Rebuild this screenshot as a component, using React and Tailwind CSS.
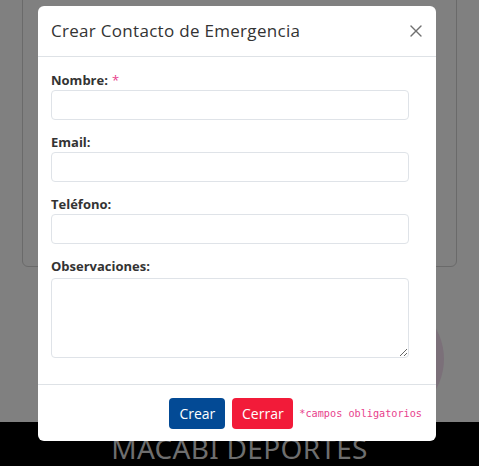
import { X } from 'lucide-react'

function Field({ label, required, children }) {
  return (
    <div className="mb-[12px]">
      <label className="block h-[20px] text-[13px] leading-[20px] font-bold text-[#333]">
        {label}
        {required && <span className="ml-[4px] text-[#e83e8c] font-normal">*</span>}
      </label>
      {children}
    </div>
  )
}

export default function App() {
  const inputCls = 'block w-full h-[30px] rounded-[4px] border border-[#dfe3e8] bg-white px-2 text-[13px] outline-none'

  return (
    <div className="relative h-[466px] w-full overflow-hidden bg-[#808080] font-['Open_Sans',sans-serif]">
      {/* page behind the overlay */}
      <div className="flex h-full flex-col">
        <div className="mx-[22px] mt-[-10px] h-[277px] rounded-b-md border border-[#6a6a6a]" />
        <div className="relative flex-1">
          <div className="absolute left-[320px] top-[30px] h-[124px] w-[124px] rounded-full bg-[#7b7079]" />
        </div>
        <div className="flex h-[44px] items-center justify-center bg-black">
          <span className="pt-[8px] text-[28px] leading-none tracking-[0.3px] text-[#6e6e6e] font-['Noto_Sans',sans-serif]">
            MACABI DEPORTES
          </span>
        </div>
      </div>

      {/* modal */}
      <div className="absolute left-[38px] top-[6px] w-[398px] rounded-md bg-white">
        <div className="flex h-[51px] items-center justify-between border-b border-[#dee2e6] pl-[13px] pr-[10px]">
          <h5 className="text-[17px] text-[#333] tracking-[0.3px]">Crear Contacto de Emergencia</h5>
          <X size={20} strokeWidth={1.6} className="text-[#707070]" />
        </div>

        <div className="pl-[13px] pr-[27px] pt-[13px] pb-[14px]">
          <Field label="Nombre:" required>
            <input className={inputCls} />
          </Field>
          <Field label="Email:">
            <input className={inputCls} />
          </Field>
          <Field label="Teléfono:">
            <input className={inputCls} />
          </Field>
          <Field label="Observaciones:">
            <textarea className="mt-[2px] block h-[80px] w-full rounded-[4px] border border-[#dfe3e8] bg-white px-2 text-[13px] outline-none" />
          </Field>
        </div>

        <div className="flex items-center justify-end gap-[6px] border-t border-[#dee2e6] pt-[13px] pb-[12px] pr-[14px]">
          <button className="h-[31px] w-[56px] rounded-[4px] bg-[#034a95] text-[14px] text-white">Crear</button>
          <button className="ml-[1px] h-[31px] w-[61px] rounded-[4px] bg-[#f21b39] text-[14px] text-white">Cerrar</button>
          <span className="text-[10.2px] text-[#e83e8c] font-['DejaVu_Sans_Mono',monospace]">*campos obligatorios</span>
        </div>
      </div>
    </div>
  )
}
